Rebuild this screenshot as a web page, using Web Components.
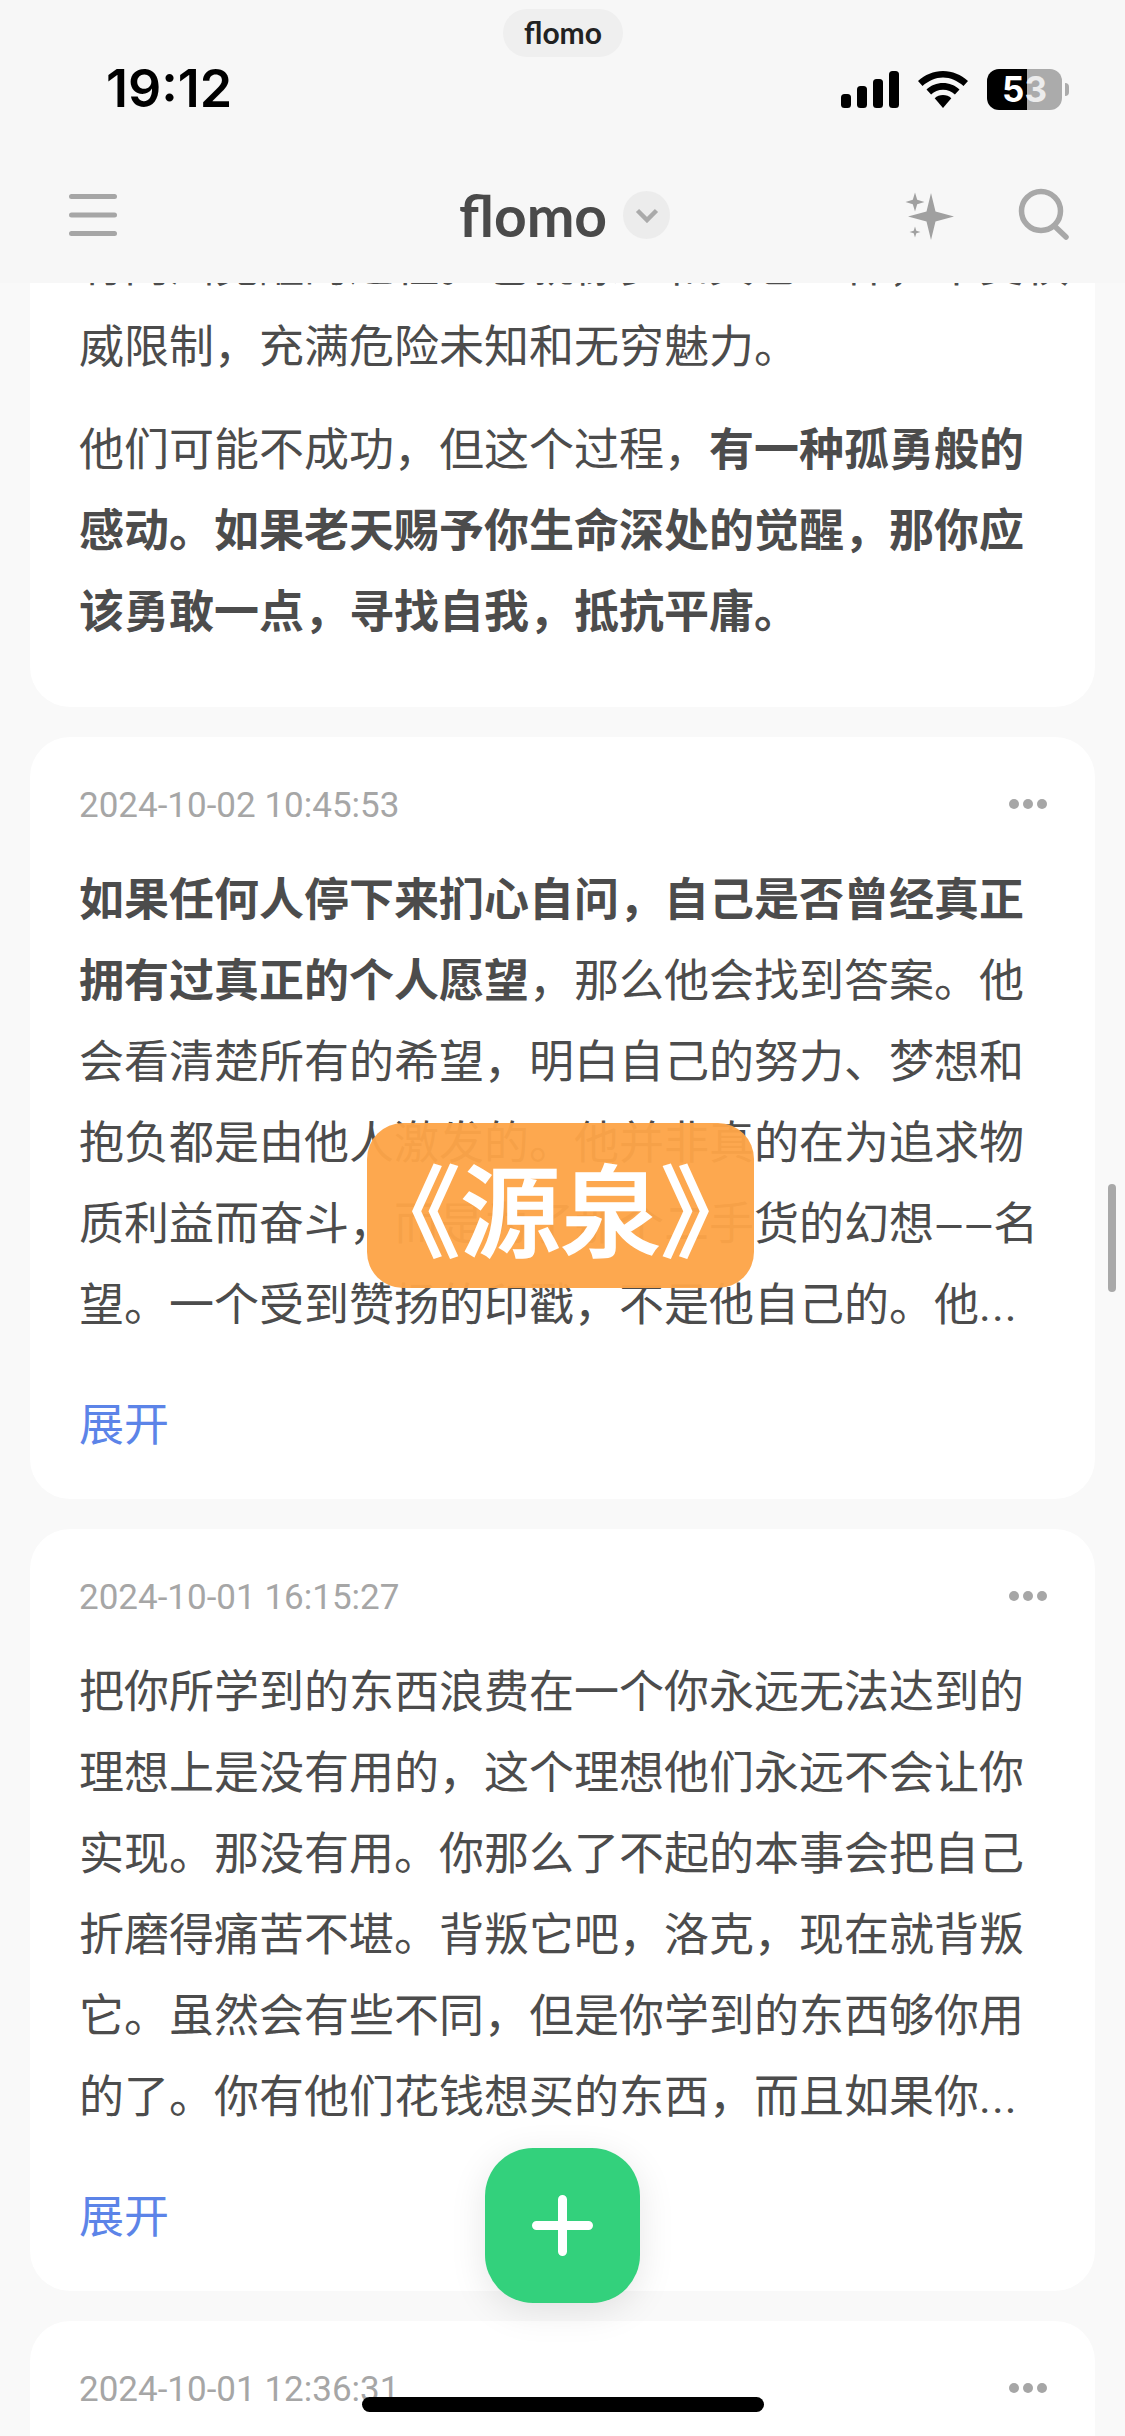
<!DOCTYPE html>
<html lang="zh">
<head>
<meta charset="utf-8">
<title>flomo</title>
<style>
  html, body { margin: 0; padding: 0; }
  body {
    width: 1125px;
    height: 2436px;
    overflow: hidden;
    background: #f9f9f9;
    font-family: "Noto Sans CJK SC", "Noto Sans", sans-serif;
  }
  .dash { font-family: Roboto, sans-serif; font-size: 38px; line-height: 0; }
  .dots { font-family: Roboto, sans-serif; letter-spacing: 1px; line-height: 0; }
</style>
</head>
<body>
<flomo-app>
  <flomo-status slot="status"></flomo-status>
  <flomo-nav slot="nav"></flomo-nav>

  <memo-card flush>
    <p class="clip">有内涵觉醒的过程。也就像梦和其它一样，不受权<br>威限制，充满危险未知和无穷魅力。</p>
    <p>他们可能不成功，但这个过程，<b>有一种孤勇般的<br>感动。如果老天赐予你生命深处的觉醒，那你应<br>该勇敢一点，寻找自我，抵抗平庸。</b></p>
  </memo-card>

  <memo-card date="2024-10-02 10:45:53" more>
    <p><b>如果任何人停下来扪心自问，自己是否曾经真正<br>拥有过真正的个人愿望</b>，那么他会找到答案。他<br>会看清楚所有的希望，明白自己的努力、梦想和<br>抱负都是由他人激发的。他并非真的在为追求物<br>质利益而奋斗，而是为了那个二手货的幻想<span class="dash">——</span>名<br>望。一个受到赞扬的印戳，不是他自己的。他<span class="dots">...</span></p>
  </memo-card>

  <memo-card date="2024-10-01 16:15:27" more>
    <p>把你所学到的东西浪费在一个你永远无法达到的<br>理想上是没有用的，这个理想他们永远不会让你<br>实现。那没有用。你那么了不起的本事会把自己<br>折磨得痛苦不堪。背叛它吧，洛克，现在就背叛<br>它。虽然会有些不同，但是你学到的东西够你用<br>的了。你有他们花钱想买的东西，而且如果你<span class="dots">...</span></p>
  </memo-card>

  <memo-card date="2024-10-01 12:36:31"></memo-card>
</flomo-app>

<script>
class FlomoApp extends HTMLElement {
  constructor() {
    super();
    this.attachShadow({ mode: 'open' });
    this.shadowRoot.innerHTML = `
      <style>
        :host {
          display: flex;
          flex-direction: column;
          position: relative;
          width: 1125px;
          height: 2436px;
          overflow: hidden;
        }
        .top {
          flex: none;
          height: 283px;
          background: #f7f7f7;
          position: relative;
          z-index: 2;
        }
        .feed {
          flex: 1;
          min-height: 0;
          overflow: hidden;
          padding: 0 30px;
          display: flex;
          flex-direction: column;
          gap: 30px;
        }
        .banner {
          position: absolute;
          left: 367px;
          top: 1123px;
          width: 387px;
          height: 165px;
          border-radius: 36px;
          background: rgba(253, 164, 72, 0.96);
          color: #fff;
          font-size: 100px;
          font-weight: 500;
          -webkit-text-stroke: 1.5px #fff;
          line-height: 165px;
          text-align: center;
          white-space: nowrap;
          display: flex;
          justify-content: center;
        }
        .bar {
          position: absolute;
          left: 1108px;
          top: 1184px;
          width: 8px;
          height: 108px;
          border-radius: 4px;
          background: #a9a9a9;
        }
        .add {
          position: absolute;
          left: 485px;
          top: 2148px;
          width: 155px;
          height: 155px;
          border-radius: 48px;
          background: #33d17c;
          box-shadow: 0 8px 36px rgba(0, 0, 0, 0.1);
          display: flex;
          align-items: center;
          justify-content: center;
        }
        .home {
          position: absolute;
          left: 362px;
          top: 2397px;
          width: 402px;
          height: 15px;
          border-radius: 8px;
          background: #000;
        }
      </style>
      <div class="top">
        <slot name="status"></slot>
        <slot name="nav"></slot>
      </div>
      <div class="feed"><slot></slot></div>
      <div class="banner">《源泉》</div>
      <div class="bar"></div>
      <div class="add">
        <svg width="61" height="61" viewBox="0 0 61 61"><path d="M30.5 4.5v52M4.5 30.5h52" stroke="#fff" stroke-width="9" stroke-linecap="round"/></svg>
      </div>
      <div class="home"></div>
    `;
  }
}

class FlomoStatus extends HTMLElement {
  constructor() {
    super();
    this.attachShadow({ mode: 'open' });
    this.shadowRoot.innerHTML = `
      <style>
        :host {
          display: block;
          height: 130px;
          position: relative;
        }
        .pill {
          position: absolute;
          left: 503px;
          top: 9px;
          width: 120px;
          height: 48px;
          border-radius: 24px;
          background: #efefef;
          color: #222;
          font: 700 30px/46px Lato, sans-serif;
          text-align: center;
        }
        .row {
          display: flex;
          align-items: center;
          height: 130px;
          padding: 48px 56px 0 106px;
          box-sizing: border-box;
        }
        .time {
          font: 600 52px/60px Inter, sans-serif;
          color: #000;
        }
        .icons {
          margin-left: auto;
          display: flex;
          align-items: center;
          gap: 19px;
        }
        .battery {
          display: flex;
          align-items: center;
          gap: 3px;
        }
        .cell {
          width: 75px;
          height: 41px;
          border-radius: 12px;
          background: linear-gradient(90deg, #000 40px, #ababab 40px);
          display: flex;
          align-items: center;
          justify-content: center;
          font: 700 35px/41px Inter, sans-serif;
          color: #fff;
        }
        .cell span + span { color: #ececec; }
        .cap {
          width: 4px;
          height: 13px;
          border-radius: 0 4px 4px 0;
          background: #ababab;
        }
      </style>
      <div class="pill">flomo</div>
      <div class="row">
        <div class="time">19:12</div>
        <div class="icons">
          <svg width="58" height="37" viewBox="0 0 58 37" fill="#000">
            <rect x="0" y="23" width="10" height="14" rx="3.5"/>
            <rect x="16" y="15" width="10" height="22" rx="3.5"/>
            <rect x="32" y="8" width="10" height="29" rx="3.5"/>
            <rect x="48" y="0" width="10" height="37" rx="3.5"/>
          </svg>
          <svg width="50" height="37" viewBox="0 0 50 37" fill="#000">
            <path d="M25 0C15.500 0 7 3.700 0 10l4.500 5C10.800 9.600 17.500 6.500 25 6.500S39.200 9.600 45.500 15L50 10C43 3.700 34.500 0 25 0z"/>
            <path d="M25 12c-6.300 0-12 2.400-16.500 6.400l4.600 5C16.300 20.500 20.400 18.800 25 18.800s8.700 1.700 11.900 4.600l4.600-5C37 14.400 31.300 12 25 12z"/>
            <path d="M25 24c-3.200 0-6.100 1.200-8.300 3.200L25 37l8.300-9.800C31.100 25.200 28.200 24 25 24z"/>
          </svg>
          <div class="battery">
            <div class="cell"><span>5</span><span>3</span></div>
            <div class="cap"></div>
          </div>
        </div>
      </div>
    `;
  }
}

class FlomoNav extends HTMLElement {
  constructor() {
    super();
    this.attachShadow({ mode: 'open' });
    this.shadowRoot.innerHTML = `
      <style>
        :host {
          display: flex;
          align-items: center;
          height: 88px;
          padding: 0 53px 0 69px;
          margin-top: 41px;
          position: relative;
        }
        .menu { flex: none; }
        .title {
          position: absolute;
          left: 459px;
          top: 0;
          height: 88px;
          display: flex;
          align-items: center;
          gap: 16px;
        }
        .logo {
          font: 700 57px/88px Lato, sans-serif;
          color: #4a4a4a;
        }
        .chev {
          width: 47px;
          height: 48px;
          border-radius: 50%;
          background: #ececec;
          display: flex;
          align-items: center;
          justify-content: center;
        }
        .right {
          margin-left: auto;
          display: flex;
          align-items: center;
          gap: 63px;
        }
      </style>
      <svg class="menu" width="48" height="42" viewBox="0 0 48 42" fill="#a6a6a6">
        <rect y="0" width="48" height="5" rx="2.500"/>
        <rect y="18.500" width="48" height="5" rx="2.500"/>
        <rect y="37" width="48" height="5" rx="2.500"/>
      </svg>
      <div class="title">
        <span class="logo">flomo</span>
        <span class="chev">
          <svg width="24" height="15" viewBox="0 0 24 15"><path d="M2.500 2.500L12 12l9.500-9.500" fill="none" stroke="#aaa" stroke-width="4.500"/></svg>
        </span>
      </div>
      <div class="right">
        <svg width="50" height="50" viewBox="0 0 50 50" fill="#a0a0a0">
          <path d="M26 3L30.500 21.500L49 26.500L30.500 31.500L26 50L21.500 31.500L3 26.500L21.500 21.500Z"/>
          <path d="M10 2.500L12.200 9.800L19.500 12L12.200 14.200L10 21.500L7.800 14.200L.5 12L7.800 9.800Z"/>
          <path d="M10 36.500L11.300 40.700L15.500 42L11.300 43.300L10 47.500L8.700 43.300L4.500 42L8.700 40.700Z"/>
        </svg>
        <svg width="54" height="54" viewBox="0 0 54 54" fill="none" stroke="#a8a8a8" stroke-width="5.500" stroke-linecap="round">
          <circle cx="23" cy="23" r="19.500"/>
          <path d="M37 38.500L48 49"/>
        </svg>
      </div>
    `;
  }
}

class MemoCard extends HTMLElement {
  constructor() {
    super();
    this.attachShadow({ mode: 'open' });
    this.shadowRoot.innerHTML = `
      <style>
        :host {
          display: block;
          flex: none;
          background: #fff;
          border-radius: 40px;
          padding: 0 49px 37px;
          box-sizing: border-box;
          color: #4c4c4c;
          font-size: 45px;
          line-height: 81px;
          white-space: nowrap;
        }
        :host([flush]) {
          border-radius: 0 0 40px 40px;
          padding-bottom: 58px;
          margin-top: -61px;
        }
        .head {
          display: flex;
          align-items: center;
          justify-content: space-between;
          height: 119px;
          padding-top: 18px;
          box-sizing: border-box;
        }
        :host([flush]) .head { display: none; }
        .date {
          font: 400 35px/40px Roboto, sans-serif;
          color: #a6a6a6;
        }
        .more {
          display: flex;
          gap: 4px;
          margin: -4px -1px 0 0;
        }
        .more i {
          width: 10px;
          height: 10px;
          border-radius: 50%;
          background: #a6a6a6;
        }
        .expand {
          margin-top: 39px;
          color: #5c84e8;
        }
        :host(:not([more])) .expand { display: none; }
        ::slotted(p) { margin: 0; }
        ::slotted(p.clip) { margin-bottom: 22px; }
      </style>
      <div class="head">
        <span class="date"></span>
        <span class="more"><i></i><i></i><i></i></span>
      </div>
      <slot></slot>
      <div class="expand">展开</div>
    `;
  }

  connectedCallback() {
    this.shadowRoot.querySelector('.date').textContent = this.getAttribute('date') || '';
  }
}

customElements.define('flomo-app', FlomoApp);
customElements.define('flomo-status', FlomoStatus);
customElements.define('flomo-nav', FlomoNav);
customElements.define('memo-card', MemoCard);
</script>
</body>
</html>
